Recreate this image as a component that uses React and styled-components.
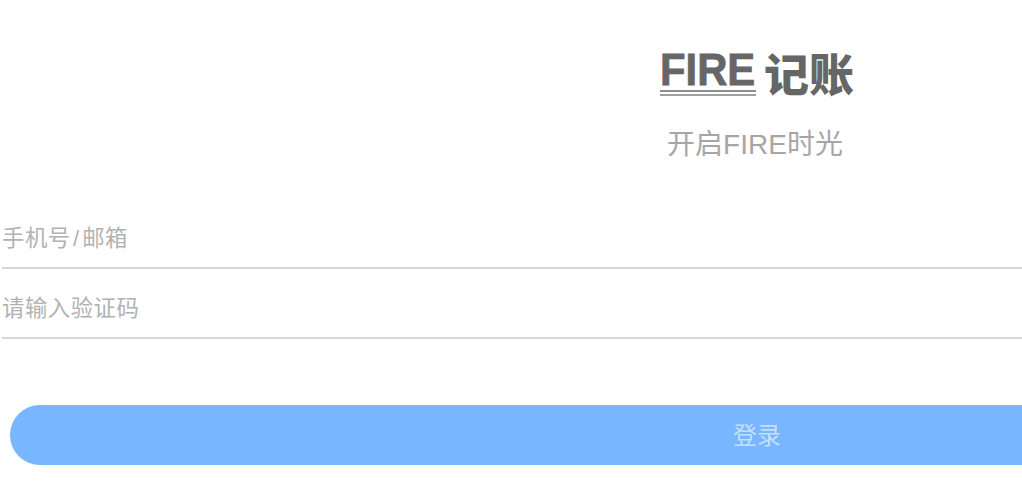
import React from "react";
import styled, { createGlobalStyle } from "styled-components";

const cjk = '"Liberation Sans", "Noto Sans CJK SC", sans-serif';

const Global = createGlobalStyle`
  html, body { margin: 0; padding: 0; background: #fff; overflow: hidden; height: 495px; }
  body { font-family: ${cjk}; }
  input::placeholder { color: #b2b2b2; opacity: 1; }
`;

const Page = styled.main`
  width: 1514px;
  display: flex;
  flex-direction: column;
`;

const Header = styled.header`
  display: flex;
  flex-direction: column;
  align-items: center;
  padding-top: 49px;
  height: 199px;
  box-sizing: border-box;
`;

const Logo = styled.div`
  display: flex;
  align-items: flex-start;
  gap: 8px;
  height: 52px;
  color: #666;
`;

const LogoLatin = styled.div`
  width: 96px;
  height: 47px;
  box-sizing: border-box;
  border-bottom: 2px solid #a0a0a0;
  display: flex;
  flex-direction: column;
`;

const LogoWord = styled.span`
  font: 700 44px/38px "Liberation Sans", sans-serif;
  -webkit-text-stroke: 0.8px #666;
  height: 41px;
  padding-top: 2px;
  box-sizing: border-box;
  white-space: nowrap;
  transform: scaleX(0.95);
  transform-origin: left center;
`;

const LogoRule = styled.span`
  display: block;
  height: 2px;
  background: #8f8f8f;
`;

const LogoCjk = styled.span`
  font: 900 45px/50px "Noto Sans CJK SC", sans-serif;
  margin-top: -1px;
  white-space: nowrap;
`;

const Subtitle = styled.p`
  margin: 24px 0 0 -4px;
  font-size: 28px;
  line-height: 40px;
  color: #a6a6a6;
`;

const Form = styled.form`
  display: flex;
  flex-direction: column;
  padding-left: 2px;
`;

const Field = styled.input`
  display: block;
  box-sizing: border-box;
  width: 100%;
  height: 70px;
  padding: 12px 0 0;
  border: 0;
  border-bottom: 2px solid #d6d6d6;
  outline: none;
  background: none;
  font-family: ${cjk};
  font-size: 22.4px;
  letter-spacing: 0.5px;
`;

const Submit = styled.button`
  display: block;
  height: 60px;
  margin: 66px 10px 0;
  padding: 0 0 4px;
  border: 0;
  border-radius: 30px;
  background: #78b6ff;
  color: #c4e0ff;
  font-family: ${cjk};
  font-size: 24px;
`;

export default function App() {
  return (
    <Page>
      <Global />
      <Header>
        <Logo>
          <LogoLatin>
            <LogoWord>FIRE</LogoWord>
            <LogoRule />
          </LogoLatin>
          <LogoCjk>记账</LogoCjk>
        </Logo>
        <Subtitle>开启FIRE时光</Subtitle>
      </Header>
      <Form onSubmit={(e) => e.preventDefault()}>
        <Field placeholder={"手机号\u200A/\u200A邮箱"} />
        <Field placeholder="请输入验证码" />
      </Form>
      <Submit type="button">登录</Submit>
    </Page>
  );
}
